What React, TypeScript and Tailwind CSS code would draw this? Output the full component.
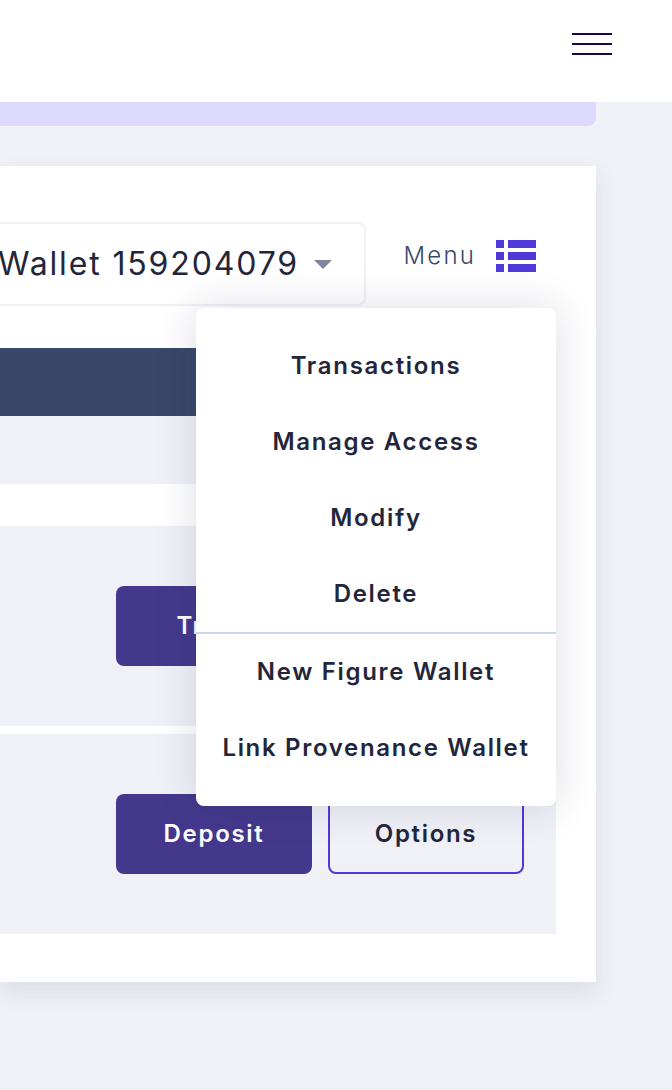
const font = { fontFamily: '"Inter", "Noto Sans", sans-serif' };

const menuTop = ['Transactions', 'Manage Access', 'Modify', 'Delete'];
const menuBottom = ['New Figure Wallet', 'Link Provenance Wallet'];

function MenuItem({ label }: { label: string }) {
  return (
    <div className="h-[76px] flex items-center justify-center text-[24px] font-semibold tracking-[0.07em] text-[#23263a] whitespace-nowrap">
      {label}
    </div>
  );
}

export default function App() {
  return (
    <div className="relative w-[672px] h-[1090px] overflow-hidden bg-[#f0f1f7]" style={font}>
      {/* Header */}
      <header className="h-[102px] bg-white flex justify-end pt-[33px] pr-[60px]">
        <div className="w-10 flex flex-col gap-2">
          <span className="block h-0.5 bg-[#1a0551]" />
          <span className="block h-0.5 bg-[#1a0551]" />
          <span className="block h-0.5 bg-[#1a0551]" />
        </div>
      </header>

      <div className="w-[596px] h-6 bg-[#dcd9fc] rounded-br-lg" />

      {/* Wallet card */}
      <main className="mt-10 w-[596px] h-[816px] bg-white pt-14 pr-10 shadow-[0_10px_22px_rgba(40,45,80,0.1)]">
        <div className="flex h-[84px] pr-5">
          <div className="-ml-[60px] w-[426px] shrink-0 h-[84px] border-2 border-[#f0f1f7] rounded-lg flex items-center justify-end pr-[32px]">
            <span className="text-[32px] tracking-[0.058em] text-[#23263a] whitespace-nowrap">Wallet 159204079</span>
            <span className="ml-[15px] w-0 h-0 border-x-[9px] border-x-transparent border-t-[9px] border-t-[#7f849f]" />
          </div>
          <div className="ml-auto mt-[18px] h-8 flex items-center gap-[20px]">
            <span className="text-[24px] font-light tracking-[0.09em] text-[#3a4768]">Menu</span>
            <svg width="40" height="32" viewBox="0 0 40 32" fill="#5138d8">
              <rect x="0" y="0" width="8" height="8" />
              <rect x="12" y="0" width="28" height="8" />
              <rect x="0" y="12" width="8" height="8" />
              <rect x="12" y="12" width="28" height="8" />
              <rect x="0" y="24" width="8" height="8" />
              <rect x="12" y="24" width="28" height="8" />
            </svg>
          </div>
        </div>

        <div className="mt-[42px] h-[68px] bg-[#3a4768]" />
        <div className="h-[68px] bg-[#f0f1f7]" />

        <div className="mt-[42px] h-[200px] bg-[#f0f1f7] flex pt-[60px] pl-[116px] gap-4">
          <button className="w-[196px] h-20 rounded-lg bg-[#44388c] text-white text-[24px] font-semibold tracking-[0.07em]">Trade</button>
        </div>

        <div className="mt-2 h-[200px] bg-[#f0f1f7] flex pt-[60px] pl-[116px] gap-4">
          <button className="w-[196px] h-20 rounded-lg bg-[#44388c] text-white text-[24px] font-semibold tracking-[0.07em]">Deposit</button>
          <button className="w-[196px] h-20 rounded-lg border-2 border-[#5138d8] text-[#23263a] text-[24px] font-semibold tracking-[0.07em]">Options</button>
        </div>
      </main>

      {/* Dropdown menu */}
      <div className="absolute left-[196px] top-[308px] w-[360px] h-[498px] bg-white rounded-lg py-5 shadow-[0_0_40px_rgba(40,45,80,0.16)]">
        {menuTop.map((label) => (
          <MenuItem key={label} label={label} />
        ))}
        <div className="h-0.5 bg-[#c9d5ef]" />
        {menuBottom.map((label) => (
          <MenuItem key={label} label={label} />
        ))}
      </div>
    </div>
  );
}
